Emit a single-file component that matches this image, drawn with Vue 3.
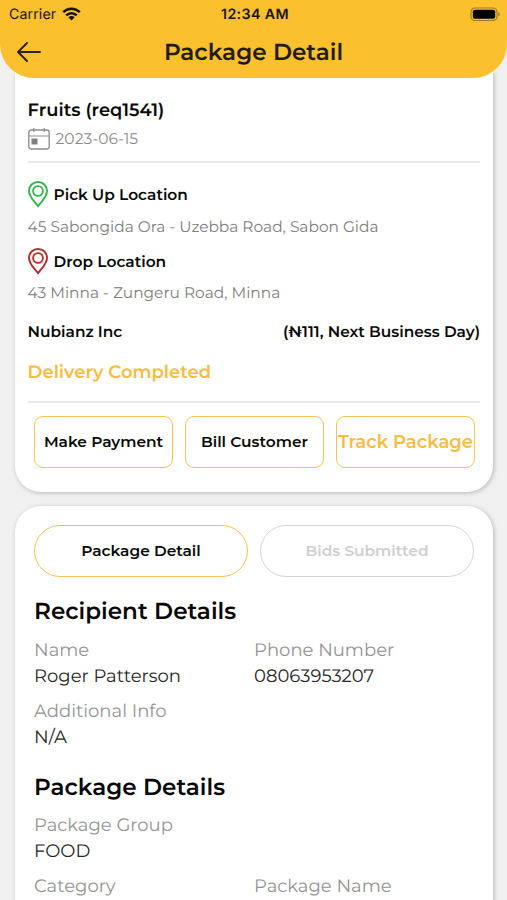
<script setup>
const actions = [
  { label: 'Make Payment', kind: 'make' },
  { label: 'Bill Customer', kind: 'bill' },
  { label: 'Track Package', kind: 'track' },
]
const pin = 'M10 25.2C6.5 20.4 1 15.8 1 9.900C1 4.800 5 1 10 1s9 3.800 9 8.900c0 5.900-5.500 10.500-9 15.300Z'
</script>

<template>
  <div class="screen">
    <header class="header">
      <div class="status">
        <div class="carrier">
          <span>Carrier</span>
          <svg width="19" height="15" viewBox="0 0 19 15">
            <g fill="none" stroke="#171308" stroke-width="2.500">
              <path d="M1.200 5.100C5.900.5 13.100.5 17.800 5.100" />
              <path d="M4.200 8.300C7.200 5.400 11.800 5.400 14.800 8.300" />
            </g>
            <path d="M6.300 10.300Q9.500 7.800 12.700 10.300L9.500 13.500Z" fill="#171308" />
          </svg>
        </div>
        <div class="clock">12:34 AM</div>
        <svg class="battery" width="31" height="15" viewBox="0 0 31 15">
          <rect x="1" y="1" width="26" height="12.500" rx="4" fill="none" stroke="#9f7c27" stroke-width="1.200" />
          <rect x="2.800" y="2.800" width="22.400" height="8.900" rx="2" fill="#000" />
          <path d="M28.300 5v4.500q3-2.200 0-4.500" fill="#9f7c27" />
        </svg>
      </div>
      <div class="navbar">
        <svg class="back" width="24" height="20" viewBox="0 0 24 20" fill="none" stroke="#2b220a" stroke-width="1.900" stroke-linecap="round" stroke-linejoin="round">
          <path d="M10 1L1 10l9 9M1 10h22" />
        </svg>
        <h1>Package Detail</h1>
      </div>
    </header>

    <section class="card summary">
      <h2 class="name">Fruits (req1541)</h2>
      <div class="date">
        <svg width="22" height="22" viewBox="0 0 22 22">
          <rect x=".8" y="2" width="20.400" height="19" rx="2.500" fill="none" stroke="#8c8c8c" stroke-width="1.300" />
          <path d="M1 8h20M5.800 0v4M16.200 0v4" stroke="#8c8c8c" stroke-width="1.200" />
          <rect x="3.500" y="10.500" width="6" height="6" fill="#808080" />
        </svg>
        <span>2023-06-15</span>
      </div>
      <hr />
      <div class="place pickup">
        <svg width="20" height="27" viewBox="0 0 20 27" fill="none" stroke="#35b54a" stroke-width="1.900">
          <path :d="pin" /><circle cx="10" cy="10" r="4.900" />
        </svg>
        <span>Pick Up Location</span>
      </div>
      <p class="address from">45 Sabongida Ora - Uzebba Road, Sabon Gida</p>
      <div class="place drop">
        <svg width="20" height="27" viewBox="0 0 20 27" fill="none" stroke="#b72b2b" stroke-width="1.900">
          <path :d="pin" /><circle cx="10" cy="10" r="4.900" />
        </svg>
        <span>Drop Location</span>
      </div>
      <p class="address to">43 Minna - Zungeru Road, Minna</p>
      <div class="company">
        <span class="firm">Nubianz Inc</span>
        <span class="price">(₦111, Next Business Day)</span>
      </div>
      <p class="state">Delivery Completed</p>
      <hr />
      <div class="actions">
        <button v-for="a in actions" :key="a.label" :class="a.kind"><span>{{ a.label }}</span></button>
      </div>
    </section>

    <section class="card details">
      <div class="tabs">
        <button class="active">Package Detail</button>
        <button class="inactive">Bids Submitted</button>
      </div>
      <h3 class="recipient">Recipient Details</h3>
      <dl class="person">
        <div><dt>Name</dt><dd>Roger Patterson</dd></div>
        <div><dt>Phone Number</dt><dd>08063953207</dd></div>
        <div><dt>Additional Info</dt><dd>N/A</dd></div>
      </dl>
      <h3 class="package">Package Details</h3>
      <dl>
        <div class="full"><dt>Package Group</dt><dd>FOOD</dd></div>
        <div><dt>Category</dt></div>
        <div><dt>Package Name</dt></div>
      </dl>
    </section>
  </div>
</template>

<style>
body { margin: 0; background: #f0f0f0; }
</style>

<style scoped>
* { box-sizing: border-box; }
.screen {
  height: 900px;
  overflow: hidden;
  background: #f0f0f0;
  color: #080808;
  font-family: Montserrat, Inter, sans-serif;
  text-rendering: geometricPrecision;
}
h1, h2, h3, p, dl, dt, dd { margin: 0; white-space: nowrap; }
svg { display: block; flex: none; }
.header {
  position: relative;
  z-index: 1;
  height: 78px;
  background: #fbc02d;
  border-radius: 0 0 34px 34px;
}
.status {
  display: grid;
  grid-template-columns: 1fr auto 1fr;
  height: 28px;
  padding: 0 6px 0 9px;
  align-items: center;
  font-family: Inter, sans-serif;
  font-size: 14.200px;
  color: #171308;
}
.carrier { display: flex; align-items: center; gap: 6px; letter-spacing: .1px; }
.clock { font-weight: 600; letter-spacing: .4px; }
.battery { justify-self: end; }
.navbar {
  display: grid;
  grid-template-columns: 24px 1fr 24px;
  align-items: center;
  height: 48px;
  padding: 0 17px;
}
h1 { text-align: center; font-size: 23.100px; font-weight: 600; line-height: 48px; color: #231c0a; }
.card {
  width: 478px;
  margin-left: 15px;
  background: #fff;
  box-shadow: 1px 1px 4px rgba(0, 0, 0, .24);
}
.summary { height: 420px; margin-top: -6px; padding: 24px 13px 0 12.600px; border-radius: 0 0 26px 26px; }
.name { font-size: 17.900px; font-weight: 600; line-height: 29px; }
.date { display: flex; align-items: center; gap: 6px; height: 27px; color: #8c8c8c; font-size: 15.500px; }
hr { height: 2px; margin: 9px 0 0; border: 0; background: #e8e8e8; }
.place { display: flex; align-items: center; gap: 6px; height: 32px; font-size: 15.400px; font-weight: 600; }
.place.pickup { margin-top: 15px; }
.address { font-size: 15.400px; line-height: 32px; color: #808080; }
.address.from { margin-top: 1px; }
.place.drop { height: 36px; }
.address.to { line-height: 28px; }
.company { display: flex; justify-content: space-between; margin-top: 10px; font-size: 15.400px; line-height: 30px; font-weight: 600; }
.state { font-size: 18px; line-height: 51px; font-weight: 600; color: #f5bd42; }
.state + hr { margin-top: 3px; }
.actions { display: flex; gap: 12px; margin-top: 13px; padding-left: 6.400px; }
button { padding: 0 0 1px; border: 1.500px solid #f5c24f; background: #fff; font-family: inherit; color: #080808; white-space: nowrap; }
.actions button { display: flex; justify-content: center; align-items: center; width: 139px; height: 52px; border-radius: 9px; font-size: 15.400px; font-weight: 600; }
.actions .track { color: #f5bd42; font-size: 18px; }
.details { height: 430px; margin-top: 14px; padding: 19px 19px 0; border-radius: 26px 26px 0 0; }
.tabs { display: grid; grid-template-columns: 214px 214px; gap: 12px; }
.tabs button { height: 52px; border-radius: 26px; font-size: 15.400px; font-weight: 600; }
.tabs .inactive { border-color: #d5d5d5; color: #cfcfcf; }
h3 { font-size: 23.100px; line-height: 32px; font-weight: 600; }
.recipient { margin-top: 18px; }
.package { margin-top: 21px; }
dl { display: grid; grid-template-columns: 220px 1fr; row-gap: 9px; margin-top: 9px; }
.person { margin-top: 10px; }
.full { grid-column: 1 / 3; }
dt, dd { font-size: 18px; line-height: 26px; }
dt { color: #949494; }
dd { color: #262626; }
</style>
